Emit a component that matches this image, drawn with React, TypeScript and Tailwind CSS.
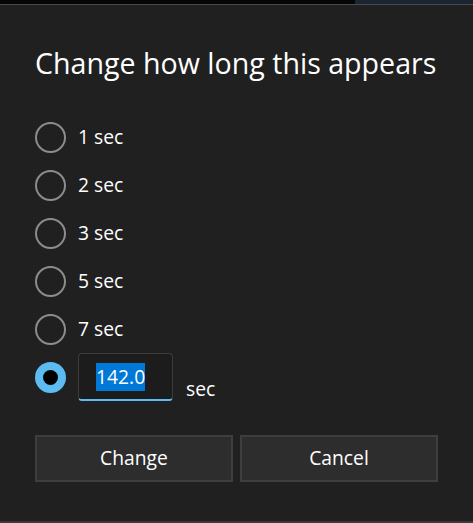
import { useState } from 'react';

const options = ['1 sec', '2 sec', '3 sec', '5 sec', '7 sec'];

const Radio = ({ checked }: { checked: boolean }) =>
  checked ? (
    <span className="flex h-[31px] w-[31px] items-center justify-center rounded-full bg-[#5cbcf2]">
      <span className="h-[15px] w-[15px] rounded-full bg-black" />
    </span>
  ) : (
    <span className="h-[31px] w-[31px] rounded-full border-2 border-[#8c8c8c]" />
  );

export default function App() {
  const [value] = useState('142.0');

  return (
    <div
      className="flex h-[523px] w-[473px] flex-col bg-[#202020] text-white"
      style={{ fontFamily: '"Open Sans", "Noto Sans", sans-serif' }}
    >
      <div className="flex h-[4px]">
        <div className="w-[355px] bg-[#050505]" />
        <div className="flex-1 bg-[#1b2431]" />
      </div>
      <div className="h-px bg-[#4a4a4a]" />

      <div className="flex flex-1 flex-col px-[35px]">
        <h1 className="mt-[38px] text-[28.6px] leading-[40px]">Change how long this appears</h1>

        <div className="mt-[30px] flex flex-col">
          {options.map((o) => (
            <label key={o} className="flex h-[48px] items-center gap-[12px]">
              <Radio checked={false} />
              <span className="text-[19.3px]">{o}</span>
            </label>
          ))}
          <div className="flex h-[48px] items-center gap-[12px]">
            <Radio checked />
            <div className="flex items-end gap-[13px]">
              <div className="flex h-[48px] w-[95px] items-center rounded-[4px] border border-[#3c3c3c] border-b-2 border-b-[#5cbcf2] bg-[#1c1c1c] pl-[17px]">
                <span className="bg-[#0078d7] text-[19.3px] leading-[28px]">{value}</span>
              </div>
              <span className="mb-[-3px] text-[19.3px]">sec</span>
            </div>
          </div>
        </div>

        <div className="mt-[34px] flex gap-[7px]">
          <button className="h-[47px] w-[199px] border-2 border-[#3e3e3e] bg-[#2d2d2d] text-[19.3px]">Change</button>
          <button className="h-[47px] w-[199px] border-2 border-[#3e3e3e] bg-[#2d2d2d] text-[19.3px]">Cancel</button>
        </div>
      </div>

      <div className="h-[2px] bg-[#3a3a3a]" />
    </div>
  );
}
